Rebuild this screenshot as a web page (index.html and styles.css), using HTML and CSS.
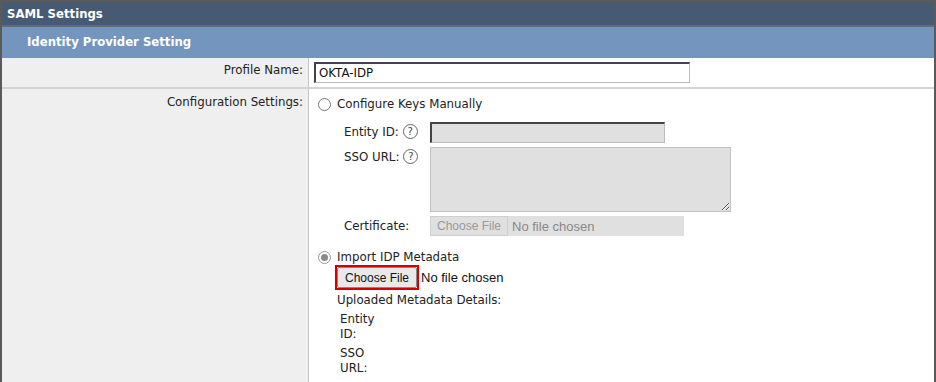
FILE: index.html
```html
<!DOCTYPE html>
<html lang="en">
<head>
  <meta charset="UTF-8">
  <title>SAML Settings</title>
  <link rel="stylesheet" href="styles.css">
</head>
<body>

  <div class="panel">
    <div class="panel-title">SAML Settings</div>
    <div class="section-title">Identity Provider Setting</div>

    <div class="row row-profile">
      <div class="label">Profile Name:</div>
      <div class="value">
        <input class="text-input profile-input" type="text" value="OKTA-IDP">
      </div>
    </div>

    <div class="row row-config">
      <div class="label">Configuration Settings:</div>
      <div class="value">
        <label class="radio-line">
          <span class="radio"></span>
          Configure Keys Manually
        </label>

        <div class="manual">
          <div class="field">
            <span class="field-label">Entity ID: <span class="help">?</span></span>
            <input class="text-input grey-input" type="text" disabled>
          </div>
          <div class="field">
            <span class="field-label">SSO URL: <span class="help">?</span></span>
            <textarea class="grey-area" disabled></textarea>
          </div>
          <div class="field field-cert">
            <span class="field-label">Certificate:</span>
            <div class="file-grey">
              <span class="file-btn-grey">Choose File</span>
              <span class="file-none">No file chosen</span>
            </div>
          </div>
        </div>

        <label class="radio-line radio-import">
          <span class="radio checked"></span>
          Import IDP Metadata
        </label>

        <div class="metadata">
          <div class="file-row">
            <span class="highlight"><button class="file-btn">Choose File</button></span>
            <span class="file-text">No file chosen</span>
          </div>
          <div class="uploaded">Uploaded Metadata Details:</div>
          <div class="meta-item">Entity<br>ID:</div>
          <div class="meta-item">SSO<br>URL:</div>
        </div>
      </div>
    </div>
  </div>

</body>
</html>
```

FILE: styles.css
```css
body {
  margin: 0;
  padding: 0;
  background-color: #fff;
  font-family: "DejaVu Sans", Verdana, sans-serif;
  font-size: 11.8px;
  color: #222;
}

.panel {
  width: 932px;
  height: 382px;
  border-left: 2px solid #5a5a5a;
  border-right: 2px solid #5a5a5a;
  border-top: 2px solid #5a5a5a;
  overflow: hidden;
}

.panel-title {
  background: #465a74;
  color: #fff;
  font-weight: bold;
  font-size: 11.7px;
  height: 23px;
  line-height: 25px;
  padding-left: 5px;
  border-bottom: 2px solid #5e6c7c;
}

.section-title {
  background: #7395be;
  color: #fff;
  font-weight: bold;
  font-size: 11.7px;
  height: 31px;
  line-height: 31px;
  padding-left: 25px;
}

.row {
  display: grid;
  grid-template-columns: 307px 1fr;
}

.row-profile {
  height: 29px;
  border-bottom: 2px solid #d4d4d4;
}

.row-config {
  height: 300px;
}

.label {
  background: #efefef;
  border-right: 1px solid #c4c4c4;
  text-align: right;
  padding-right: 5px;
}

.row-profile .label {
  line-height: 24px;
}

.row-config .label {
  padding-top: 6px;
}

.value {
  padding-left: 5px;
}

.row-profile .value {
  padding-top: 4px;
}

.text-input {
  box-sizing: border-box;
  height: 21px;
  border: 1px solid #bbb;
  border-top: 2px solid #444;
  border-left: 2px solid #444;
  font-family: "DejaVu Sans", Verdana, sans-serif;
  font-size: 11.8px;
  padding: 0 3px;
  color: #111;
  margin: 0;
}

.profile-input {
  width: 376px;
  background: #fff;
}

.radio-line {
  display: flex;
  align-items: center;
  gap: 6px;
  height: 14px;
  margin-top: 8px;
  margin-left: 4px;
}

.radio {
  box-sizing: border-box;
  width: 13px;
  height: 13px;
  border: 1px solid #777;
  border-radius: 50%;
  background: #fff;
  position: relative;
}

.radio.checked {
  border-color: #999;
}

.radio.checked::after {
  content: "";
  position: absolute;
  left: 2px;
  top: 2px;
  width: 7px;
  height: 7px;
  border-radius: 50%;
  background: #8a8a8a;
}

.manual {
  margin-left: 30px;
  margin-top: 11px;
}

.field {
  display: flex;
  align-items: flex-start;
  margin-bottom: 4px;
}

.field-label {
  width: 86px;
  display: flex;
  align-items: center;
  gap: 4px;
  padding-top: 2px;
}

.help {
  box-sizing: border-box;
  display: inline-flex;
  justify-content: center;
  align-items: center;
  width: 15px;
  height: 15px;
  border: 1px solid #666;
  border-radius: 50%;
  font-size: 10px;
  color: #444;
}

.grey-input {
  width: 235px;
  background: #e0e0e0;
}

.grey-area {
  box-sizing: border-box;
  width: 301px;
  height: 65px;
  background: #e0e0e0;
  border: 1px solid #c2c2c2;
  margin: 0;
}

.field-cert {
  margin-top: 0;
  align-items: center;
}

.field-cert .field-label {
  padding-top: 0;
}

.file-grey {
  display: flex;
  align-items: center;
  width: 254px;
  height: 20px;
  background: #e0e0e0;
}

.file-btn-grey {
  box-sizing: border-box;
  height: 20px;
  line-height: 18px;
  padding: 0 6px;
  border: 1px solid #cfcfcf;
  color: #999;
  font-family: "Liberation Sans", Arial, sans-serif;
  font-size: 12px;
}

.file-none {
  color: #888;
  margin-left: 4px;
  font-family: "Liberation Sans", Arial, sans-serif;
  font-size: 13px;
}

.radio-import {
  margin-top: 14px;
}

.metadata {
  margin-left: 23px;
}

.file-row {
  display: flex;
  align-items: center;
  margin-top: 1px;
}

.highlight {
  display: inline-block;
  border: 2px solid #d40000;
  margin-left: -2px;
}

.file-btn {
  display: block;
  height: 21px;
  padding: 0 7px;
  margin: 0;
  background: #e9e9e9;
  border: 1px solid #888;
  border-radius: 2px;
  font-family: "Liberation Sans", Arial, sans-serif;
  font-size: 12px;
  color: #111;
}

.file-text {
  margin-left: 2px;
  font-family: "Liberation Sans", Arial, sans-serif;
  font-size: 13px;
  color: #111;
}

.uploaded {
  margin-top: 2px;
  line-height: 16px;
}

.meta-item {
  margin-left: 3px;
  margin-top: 4px;
  line-height: 15px;
}
```
